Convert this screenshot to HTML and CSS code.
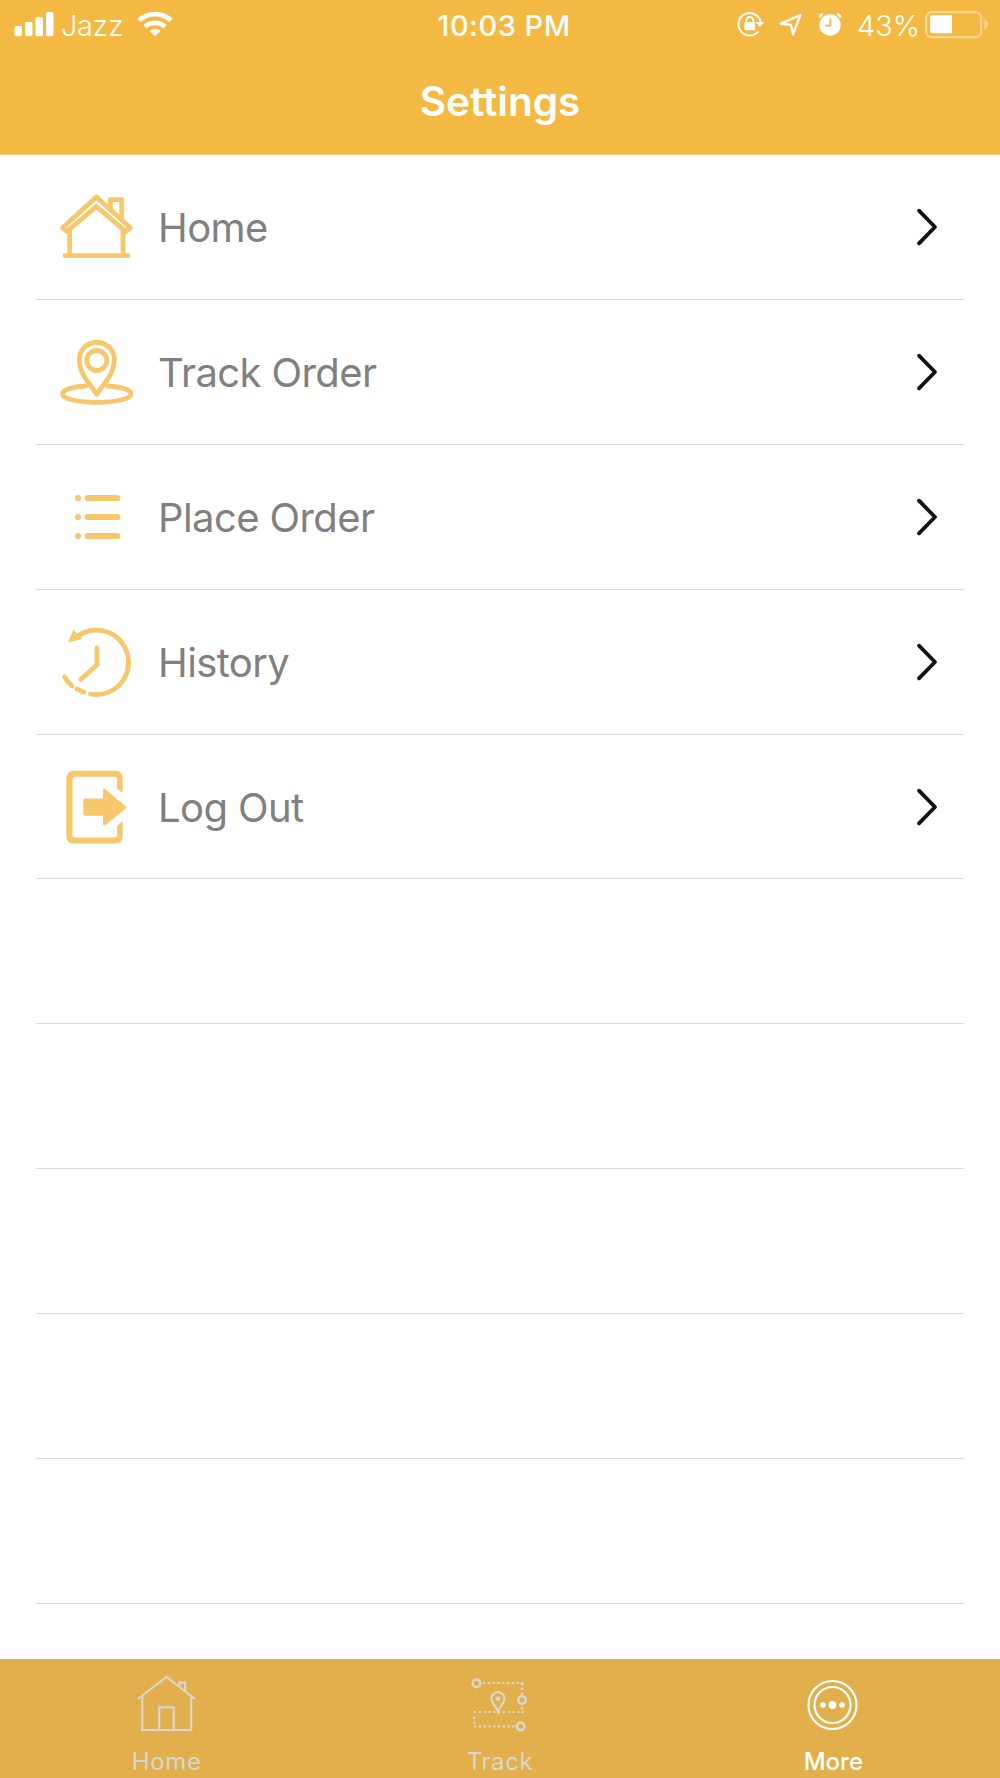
FILE: index.html
```html
<!DOCTYPE html>
<html lang="en">

<head>
    <meta charset="UTF-8">
    <meta name="viewport" content="width=device-width, initial-scale=1.0">
    <title>Settings</title>
    <link rel="stylesheet" href="styles.css">
</head>

<body>

    <header class="header">
        <div class="status-bar">
            <div class="status-left">
                <svg width="40" height="26" viewBox="0 0 40 26" fill="#fff">
                    <rect x="0.5" y="15" width="7.5" height="10.3" rx="2" />
                    <rect x="11" y="11" width="7.5" height="14.3" rx="2" />
                    <rect x="21.5" y="6" width="7.5" height="19.3" rx="2" />
                    <rect x="32" y="1" width="7.5" height="24.3" rx="2" />
                </svg>
                <span class="carrier">Jazz</span>
                <svg class="wifi" width="36" height="26" viewBox="0 0 36 26" fill="none" stroke="#fff" stroke-width="4.8">
                    <path d="M2 9.5 A23.5 23.5 0 0 1 34 9.5" />
                    <path d="M8 15.6 A15 15 0 0 1 28 15.6" />
                    <path d="M12.6 20 Q18 15.4 23.4 20 L18 25.4 Z" fill="#fff" stroke="none" />
                </svg>
            </div>
            <span class="time">10:03 PM</span>
            <div class="status-right">
                <svg width="28" height="26" viewBox="0 0 28 26" fill="none" stroke="#fff" stroke-width="2">
                    <path d="M23.6 11 A11.2 11.2 0 1 0 21.6 20" />
                    <path d="M18.7 11 H27.3 L23 16 Z" fill="#fff" stroke="none" />
                    <path d="M9.3 12 V9.5 A3.5 3.5 0 0 1 16.3 9.5 V12" stroke-width="1.8" />
                    <rect x="7.3" y="11.3" width="10.8" height="8" rx="1" fill="#fff" stroke="none" />
                </svg>
                <svg width="24" height="26" viewBox="0 0 24 26" fill="none" stroke="#fff" stroke-width="2.4" stroke-linejoin="round">
                    <path d="M2 12.7 L21.3 4 L14 23.3 L12 13.9 Z" />
                </svg>
                <svg width="24" height="26" viewBox="0 0 24 26" fill="none">
                    <circle cx="12" cy="14" r="10.7" fill="#fff" />
                    <path d="M1.8 6.5 Q2 3.5 5 3.2 M22.2 6.5 Q22 3.5 19 3.2" stroke="#fff" stroke-width="2.6" />
                    <path d="M12.3 7.5 V14.7 H7" stroke="#f4b942" stroke-width="1.8" />
                </svg>
                <span class="percent">43%</span>
                <svg class="battery" width="64" height="28" viewBox="0 0 64 28">
                    <rect x="1.2" y="1.2" width="55" height="25" rx="5.5" fill="none" stroke="#fad592" stroke-width="2.2" />
                    <path d="M59.3 8.5 Q62.8 10 62.8 13.5 Q62.8 17 59.3 18.5 Z" fill="#fad592" />
                    <path d="M27 4.3 H7.5 Q5 4.3 5 7 V19.5 Q5 22.2 7.5 22.2 H27 Z" fill="#fff" />
                </svg>
            </div>
        </div>
        <h1>Settings</h1>
    </header>

    <main class="list">
        <a class="row" href="#">
            <svg class="icon" viewBox="0 0 74 74">
                <path d="M36.3 7 L2.7 37.8 L7 41.3 L36.3 16.5 L65.7 41.3 L70.3 37.8 Z" />
                <path d="M50.3 18.5 V9.7 H61.7 V27.5" />
                <path d="M9.7 41 V65.7 M63 41 V65.7 M5 65.7 H68" />
            </svg>
            <span class="label">Home</span>
            <svg class="chevron" viewBox="0 0 22 38"><path d="M3 2.7 L19 19 L3 35.3" /></svg>
        </a>
        <a class="row" href="#">
            <svg class="icon" viewBox="0 0 74 74">
                <path d="M36.8 59.3 C32 51 19.3 40 19.3 24.5 C19.3 14.5 27 7.5 36.8 7.5 C46.6 7.5 54.3 14.5 54.3 24.5 C54.3 40 41.6 51 36.8 59.3 Z" />
                <circle cx="36.8" cy="25.5" r="10" />
                <path d="M26 51 C12 52 2.6 54.5 2.6 59 C2.6 64 18 67.3 36.8 67.3 C55.6 67.3 71 64 71 59 C71 54.5 61.6 52 47.6 51" />
            </svg>
            <span class="label">Track Order</span>
            <svg class="chevron" viewBox="0 0 22 38"><path d="M3 2.7 L19 19 L3 35.3" /></svg>
        </a>
        <a class="row" href="#">
            <svg class="icon" viewBox="0 0 74 74">
                <path class="bars" d="M27.7 18 H57.3 M27.7 37 H57.3 M27.7 56 H57.3 M18 18 V18.01 M18 37 V37.01 M18 56 V56.01" />
            </svg>
            <span class="label">Place Order</span>
            <svg class="chevron" viewBox="0 0 22 38"><path d="M3 2.7 L19 19 L3 35.3" /></svg>
        </a>
        <a class="row" href="#">
            <svg class="icon" viewBox="0 0 74 74">
                <path d="M17 11.6 A32.2 32.2 0 1 1 30.5 69" />
                <path d="M24 67.3 L17 64 M12 61 Q7.5 57 4.6 51.8" />
                <path d="M37 23 V39.7 L20.8 54.5" />
                <path class="solid" d="M13.3 4.7 L8.3 17.3 L22.3 14.3 Z" />
            </svg>
            <span class="label">History</span>
            <svg class="chevron" viewBox="0 0 22 38"><path d="M3 2.7 L19 19 L3 35.3" /></svg>
        </a>
        <a class="row" href="#">
            <svg class="icon" viewBox="0 0 74 74">
                <path class="solid" d="M62.7 23 V8.8 Q62.7 0.8 54.7 0.8 H14.3 Q6.3 0.8 6.3 8.8 V65.5 Q6.3 73.5 14.3 73.5 H54.7 Q62.7 73.5 62.7 65.5 V51 L57 56 V65 Q57 67.5 54.5 67.5 H15 Q12.5 67.5 12.5 65 V9.3 Q12.5 6.8 15 6.8 H54.5 Q57 6.8 57 9.3 V18.5 Z" />
                <path class="solid" d="M25 28.5 H43 V20 Q43 18 45 19 L65.5 36.3 Q66.8 37.5 65.5 38.7 L45 55.2 Q43 56.5 43 54.3 V45.8 H25 Q23.3 45.8 23.3 44 V30.3 Q23.3 28.5 25 28.5 Z" />
            </svg>
            <span class="label">Log Out</span>
            <svg class="chevron" viewBox="0 0 22 38"><path d="M3 2.7 L19 19 L3 35.3" /></svg>
        </a>
        <div class="row"></div>
        <div class="row"></div>
        <div class="row"></div>
        <div class="row"></div>
        <div class="row"></div>
    </main>

    <nav class="tab-bar">
        <a class="tab" href="#">
            <svg width="60" height="60" viewBox="0 0 60 60">
                <path d="M1 24 L29.5 2 L58 24" />
                <path d="M5.2 21 V55 H54.2 V21" />
                <path d="M22.2 55 V32.3 H36.8 V55" />
                <path d="M42.2 11.5 V7.7 H48.2 V16" />
            </svg>
            <span>Home</span>
        </a>
        <a class="tab" href="#">
            <svg width="60" height="60" viewBox="0 0 60 60">
                <path class="dots" d="M13 8 H54 M52 8 V38 M4 37 H54 M4 42 V51.5 M4 51.3 H45" />
                <circle class="stop" cx="6.5" cy="8.3" r="3.8" />
                <circle class="stop" cx="52" cy="25" r="3.8" />
                <circle class="stop" cx="50.7" cy="51.3" r="3.8" />
                <path d="M28 37 C26 31 21.5 28 21.5 23.5 A6.5 6.5 0 0 1 34.5 23.5 C34.5 28 30 31 28 37 Z" />
                <circle class="fill" cx="28" cy="23.7" r="2.4" />
            </svg>
            <span>Track</span>
        </a>
        <a class="tab active" href="#">
            <svg width="60" height="60" viewBox="0 0 60 60">
                <circle cx="29.5" cy="30" r="24" />
                <circle cx="29.5" cy="30" r="18" />
                <circle class="fill" cx="20" cy="30" r="2.8" />
                <circle class="fill" cx="29.5" cy="30" r="3.9" />
                <circle class="fill" cx="39" cy="30" r="2.8" />
            </svg>
            <span>More</span>
        </a>
    </nav>

</body>

</html>
```
FILE: styles.css
```css
/* Basic Reset */
* {
    margin: 0;
    padding: 0;
    box-sizing: border-box;
}

body {
    font-family: 'Inter', 'Liberation Sans', sans-serif;
    background-color: #fff;
    display: flex;
    flex-direction: column;
    height: 1778px;
    overflow: hidden;
}

svg {
    display: block;
    flex: none;
}

a {
    color: inherit;
    text-decoration: none;
}

/* Header */
.header {
    height: 155px;
    flex: none;
    background-color: #f4b942;
    color: #fff;
    border-bottom: 1px solid #f7ca71;
}

.status-bar {
    display: flex;
    justify-content: space-between;
    height: 50px;
    padding: 11px 11px 0 14px;
    font-size: 29px;
    line-height: 30px;
    white-space: nowrap;
}

.status-left {
    display: flex;
    width: 380px;
}

.status-right {
    display: flex;
    justify-content: flex-end;
    width: 375px;
}

.status-right svg + svg {
    margin-left: 14.5px;
}

.carrier {
    width: 76px;
    margin-left: 7px;
    font-weight: 300;
    letter-spacing: -0.4px;
}

.time {
    font-weight: 500;
    letter-spacing: 0.5px;
}

.percent {
    width: 62px;
    margin-left: 15px;
    font-weight: 300;
}

.status-right .battery {
    margin-left: 6px;
}

h1 {
    font-size: 40.5px;
    line-height: 50px;
    font-weight: 600;
    text-align: center;
    padding-top: 27px;
}

/* Settings list */
.list {
    flex: 1;
    min-height: 0;
    overflow: hidden;
    padding: 0 36px;
}

.row {
    display: flex;
    align-items: center;
    height: 144.9px;
    padding: 0 26px 0 24px;
    border-bottom: 1px solid #d9d9db;
}

.icon {
    width: 74px;
    height: 74px;
    fill: none;
    stroke: #f6c76b;
    stroke-width: 4.8;
    stroke-linecap: round;
    stroke-linejoin: round;
}

.icon .solid {
    fill: #f6c76b;
    stroke: none;
}

.icon .bars {
    stroke-width: 6.2;
}

.label {
    flex: 1;
    margin-left: 24px;
    padding-top: 1px;
    font-size: 40px;
    letter-spacing: -0.6px;
    color: #808080;
}

.chevron {
    width: 22px;
    height: 38px;
    fill: none;
    stroke: #111;
    stroke-width: 3.8;
    stroke-linecap: round;
    stroke-linejoin: round;
}

/* Bottom tabs */
.tab-bar {
    display: flex;
    flex: none;
    height: 119px;
    background-color: #e1af4b;
    border-top: 1px solid #c9b48b;
}

.tab {
    flex: 1;
    display: flex;
    flex-direction: column;
    align-items: center;
    padding-top: 15px;
    color: #d9d6d0;
    font-size: 24px;
    line-height: 28px;
    letter-spacing: 0.6px;
}

.tab span {
    margin-top: 13px;
}

.tab svg {
    fill: none;
    stroke: currentColor;
    stroke-width: 2.2;
}

.tab .fill {
    fill: currentColor;
    stroke: none;
}

.tab .stop {
    fill: #e1af4b;
    stroke-width: 2.6;
}

.tab .dots {
    stroke-dasharray: 2.2 2.6;
}

.tab.active {
    color: #fff;
    font-weight: 500;
    letter-spacing: 0;
}
```
